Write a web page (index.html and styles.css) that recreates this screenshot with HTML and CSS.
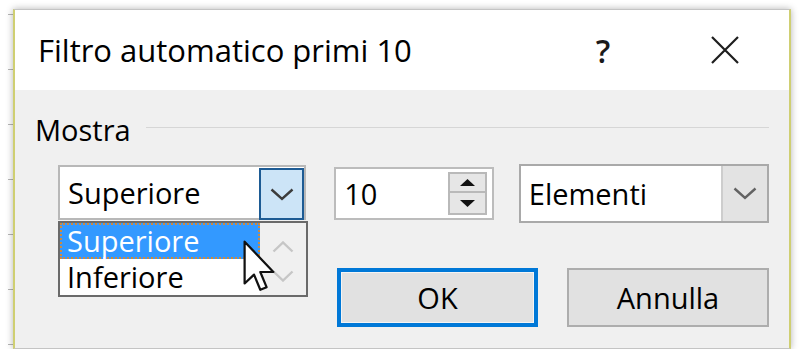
FILE: index.html
```html
<!DOCTYPE html>
<html lang="it">
<head>
  <meta charset="UTF-8" />
  <meta name="viewport" content="width=device-width, initial-scale=1.0"/>
  <title>Filtro automatico primi 10</title>
  <link rel="stylesheet" href="styles.css">
</head>
<body>
  <div class="dialog">
    <div class="titlebar">
      <span class="title">Filtro automatico primi 10</span>
      <span class="help">?</span>
      <span class="close">
        <svg width="30" height="28" viewBox="0 0 30 28"><path d="M2 1 L28 27 M28 1 L2 27" stroke="#1e1e1e" stroke-width="2.2" fill="none"/></svg>
      </span>
    </div>

    <div class="content">
      <div class="group-head">
        <span class="group-label">Mostra</span>
        <span class="group-rule"></span>
      </div>

      <div class="controls">
        <div class="combo combo-top">
          <span class="combo-text">Superiore</span>
          <span class="combo-btn">
            <svg width="24" height="13" viewBox="0 0 24 13"><polyline points="1.5,1.5 12,11 22.5,1.5" stroke="#3c3c3c" stroke-width="2.4" fill="none"/></svg>
          </span>
          <div class="drop-list">
            <ul class="drop-items">
              <li class="selected">Superiore</li>
              <li>Inferiore</li>
            </ul>
            <div class="drop-scroll">
              <svg width="22" height="12" viewBox="0 0 22 12"><polyline points="1.5,10.5 11,1.5 20.5,10.5" stroke="#c6c6c6" stroke-width="2.4" fill="none"/></svg>
              <svg width="22" height="12" viewBox="0 0 22 12"><polyline points="1.5,1.5 11,10.5 20.5,1.5" stroke="#c6c6c6" stroke-width="2.4" fill="none"/></svg>
            </div>
          </div>
        </div>

        <div class="spin">
          <span class="spin-text">10</span>
          <div class="spin-btns">
            <span class="spin-up"><svg width="15" height="7" viewBox="0 0 15 7"><polygon points="7.5,0 15,7 0,7" fill="#111"/></svg></span>
            <span class="spin-down"><svg width="15" height="7" viewBox="0 0 15 7"><polygon points="0,0 15,0 7.5,7" fill="#111"/></svg></span>
          </div>
        </div>

        <div class="combo combo-unit">
          <span class="combo-text">Elementi</span>
          <span class="combo-btn">
            <svg width="24" height="13" viewBox="0 0 24 13"><polyline points="1.5,1.5 12,11 22.5,1.5" stroke="#636363" stroke-width="2.4" fill="none"/></svg>
          </span>
        </div>
      </div>

      <div class="buttons">
        <button class="btn btn-default">OK</button>
        <button class="btn">Annulla</button>
      </div>
    </div>

    <svg class="cursor" width="34" height="55" viewBox="0 0 13 21">
      <path d="M1 1 L1 17 L4.6 13.6 L7 19.4 L9.4 18.4 L7 12.6 L12 12.6 Z" fill="#fff" stroke="#111" stroke-width="0.85" stroke-linejoin="round"/>
    </svg>
  </div>
</body>
</html>
```

FILE: styles.css
```css
body {
  margin: 0;
  background-color: #fff;
  background-image: repeating-linear-gradient(to bottom, transparent 0, transparent 54px, #b5b5b5 54px, #b5b5b5 56px);
  background-size: 5px 55px;
  background-position: 8px 15px;
  background-repeat: repeat-y;
  font-family: "Open Sans", "Noto Sans", sans-serif;
  color: #000;
}
.dialog {
  position: relative;
  margin: 9px 0 0 13px;
  width: 778px;
  height: 340px;
  box-sizing: border-box;
  border: 1px solid #c4c4c4;
  border-left: 2px solid #cfcf72;
  border-right: 2px solid #cfcf72;
  background: #f0f0f0;
  box-shadow: 0 0 7px rgba(0,0,0,0.3);
  display: flex;
  flex-direction: column;
}
.titlebar {
  height: 80px;
  background: #fff;
  display: flex;
  align-items: center;
  padding: 0 49px 0 23px;
}
.title {
  flex: 1;
  font-size: 31px;
}
.help {
  width: 30px;
  margin-right: 92px;
  text-align: center;
  font-size: 32px;
  font-weight: 600;
  color: #1a1a1a;
}
.close {
  width: 30px;
  height: 28px;
  display: flex;
}
.content {
  flex: 1;
  padding: 0 20px;
  display: flex;
  flex-direction: column;
}
.group-head {
  margin-top: 20px;
  height: 40px;
  display: flex;
}
.group-label {
  font-size: 29px;
  line-height: 40px;
}
.group-rule {
  flex: 1;
  height: 1px;
  margin: 17px 0 0 15px;
  background: #d6d6d6;
}
.controls {
  margin-top: 14px;
  padding-left: 23px;
  display: flex;
  align-items: flex-start;
}
.combo {
  position: relative;
  box-sizing: border-box;
  background: #fff;
  display: flex;
  align-items: center;
}
.combo-text {
  flex: 1;
  padding-left: 8px;
  font-size: 29px;
}
.combo-btn {
  width: 45px;
  align-self: stretch;
  box-sizing: border-box;
  display: flex;
  align-items: center;
  justify-content: center;
}
.combo-top {
  margin-top: 1px;
  width: 249px;
  height: 55px;
  border: 2px solid #b8b8b8;
}
.combo-top .combo-btn {
  margin: 1px 0 -2px 0;
  border: 2px solid #1d5b94;
  background: #cce4f7;
}
.combo-unit {
  margin-left: 25px;
  width: 251px;
  height: 59px;
  border: 2px solid #a9a9a9;
}
.combo-unit .combo-btn {
  width: 46px;
  background: #e3e3e3;
  border-left: 2px solid #cdcdcd;
}
.drop-list {
  position: absolute;
  left: -2px;
  top: calc(100% + 3px);
  width: 250px;
  height: 76px;
  box-sizing: border-box;
  border: 2px solid #6a6a6a;
  background: #fff;
  display: flex;
  z-index: 2;
}
.drop-items {
  list-style: none;
  margin: 0;
  padding: 0;
  width: 200px;
}
.drop-items li {
  height: 36px;
  box-sizing: border-box;
  padding-left: 7px;
  font-size: 29px;
  line-height: 36px;
}
.drop-items .selected {
  background: #3399ff;
  color: #fff;
  border: 2px dotted #d08a3c;
  padding-left: 5px;
  line-height: 32px;
}
.drop-scroll {
  flex: 1;
  background: #f0f0f0;
  display: flex;
  flex-direction: column;
  align-items: center;
  padding-top: 18px;
  gap: 17px;
}
.spin {
  margin: 3px 0 0 28px;
  width: 160px;
  height: 53px;
  box-sizing: border-box;
  border: 2px solid #bcbcbc;
  background: #fff;
  display: flex;
  align-items: center;
}
.spin-text {
  flex: 1;
  padding-left: 8px;
  font-size: 29px;
}
.spin-btns {
  align-self: flex-start;
  margin: 3px 5px 0 0;
  width: 39px;
  display: flex;
  flex-direction: column;
}
.spin-up, .spin-down {
  box-sizing: border-box;
  height: 21px;
  border: 2px solid #b9b9b9;
  background: #e6e6e6;
  display: flex;
  align-items: center;
  justify-content: center;
}
.spin-down {
  height: 22px;
  border-top: none;
}
.buttons {
  margin-top: 45px;
  display: flex;
  justify-content: flex-end;
  gap: 29px;
}
.btn {
  box-sizing: border-box;
  width: 202px;
  height: 59px;
  border: 2px solid #adadad;
  background: #e1e1e1;
  font-family: "Open Sans", "Noto Sans", sans-serif;
  font-size: 29px;
  color: #000;
  padding: 0;
}
.btn-default {
  width: 201px;
  border: 4px solid #0078d7;
  box-shadow: inset 0 0 0 1px #f4f4f4;
}
.cursor {
  position: absolute;
  left: 227px;
  top: 229px;
  z-index: 3;
}
```
